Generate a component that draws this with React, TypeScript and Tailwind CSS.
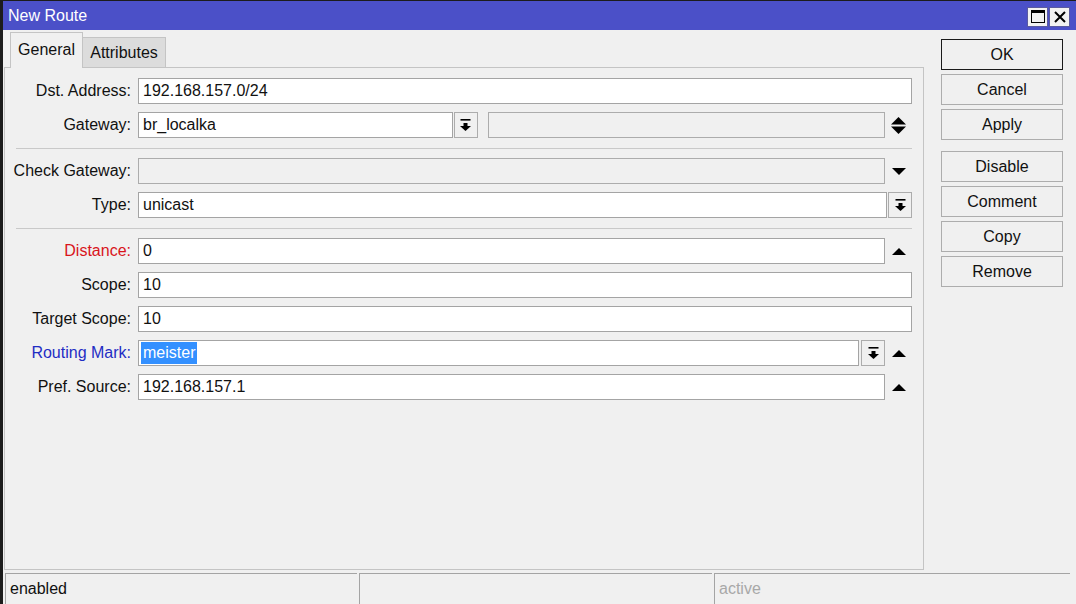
import React from 'react';

const font = { fontFamily: '"Liberation Sans", Arial, sans-serif' };

function DropIcon() {
    return (
        <svg width="11" height="12" viewBox="0 0 11 12">
            <rect x="0.5" y="0" width="10" height="1.6" fill="#000" />
            <rect x="3.5" y="4" width="4" height="3.5" fill="#000" />
            <polygon points="0,7 11,7 5.5,12" fill="#000" />
        </svg>
    );
}

function UpTri() {
    return (
        <svg width="14" height="7" viewBox="0 0 14 7">
            <polygon points="7,0 14,7 0,7" fill="#000" />
        </svg>
    );
}

function DownTri() {
    return (
        <svg width="14" height="7" viewBox="0 0 14 7">
            <polygon points="0,0 14,0 7,7" fill="#000" />
        </svg>
    );
}

function UpDown() {
    return (
        <svg width="15" height="17" viewBox="0 0 15 17">
            <polygon points="7.5,0 15,7.5 0,7.5" fill="#000" />
            <polygon points="0,9.5 15,9.5 7.5,17" fill="#000" />
        </svg>
    );
}

function Field({ value, disabled, className }: { value?: string; disabled?: boolean; className?: string }) {
    return (
        <div
            className={`h-[26px] border flex items-center pl-[4px] text-[16px] text-[#111] ${disabled ? 'bg-[#f0f0f0] border-[#acacac]' : 'bg-white border-[#a4a4a4]'} ${className ?? ''}`}
        >
            {value}
        </div>
    );
}

function DropBtn() {
    return (
        <div className="w-[24px] h-[26px] border border-[#acacac] bg-[#f0f0f0] flex items-center justify-center">
            <DropIcon />
        </div>
    );
}

function Row({ label, color, children }: { label: string; color?: string; children: React.ReactNode }) {
    return (
        <div className="flex items-center h-[26px] mb-[8px]">
            <div className={`w-[126px] text-right text-[16px] ${color ?? 'text-[#111]'}`}>{label}</div>
            <div className="ml-[7px] w-[774px] flex items-center">{children}</div>
        </div>
    );
}

function IconCell({ children }: { children: React.ReactNode }) {
    return <div className="w-[27px] flex items-center justify-center ml-auto">{children}</div>;
}

function Sep() {
    return <div className="ml-[11px] w-[896px] h-px bg-[#c9c9c9] mt-[2px] mb-[9px]" />;
}

const buttons1 = ['OK', 'Cancel', 'Apply'];
const buttons2 = ['Disable', 'Comment', 'Copy', 'Remove'];

function Btn({ label, main }: { label: string; main?: boolean }) {
    return (
        <div
            className={`w-[122px] h-[31px] flex items-center justify-center text-[16px] text-[#111] bg-[#f0f0f0] border ${main ? 'border-[#1a1a1a]' : 'border-[#adadad]'}`}
        >
            {label}
        </div>
    );
}

export default function App() {
    return (
        <div style={font} className="w-[1076px] h-[604px] flex flex-col bg-[#f0f0f0] border-l-[3px] border-t border-[#1c1c1c] overflow-hidden">
            {/* title bar */}
            <div className="h-[29px] bg-[#4b50c8] flex items-center pl-[5px] pr-[6px]">
                <span className="text-white text-[16px]">New Route</span>
                <div className="ml-auto flex gap-[1px] mt-[2px]">
                    <div className="w-[21px] h-[20px] bg-[#f2f2f2] border border-[#5a5aa0] flex items-center justify-center">
                        <svg width="14" height="13" viewBox="0 0 14 13">
                            <rect x="0.5" y="0.5" width="13" height="12" fill="none" stroke="#000" strokeWidth="1" />
                            <rect x="0" y="0" width="14" height="3" fill="#000" />
                        </svg>
                    </div>
                    <div className="w-[21px] h-[20px] bg-[#f2f2f2] border border-[#5a5aa0] flex items-center justify-center">
                        <svg width="12" height="12" viewBox="0 0 12 12">
                            <path d="M1 1 L11 11 M11 1 L1 11" stroke="#000" strokeWidth="2" />
                        </svg>
                    </div>
                </div>
            </div>

            {/* body */}
            <div className="flex-1 flex">
                <div className="ml-[1px] flex flex-col pt-[2px]">
                    <div className="flex items-end h-[35px] ml-[6px]">
                        <div className="h-[36px] -mb-px w-[73px] border border-b-0 border-[#c4c4c4] bg-[#f0f0f0] flex items-center justify-center text-[16px] text-[#111] relative z-10 pb-[2px]">
                            General
                        </div>
                        <div className="h-[30px] w-[83px] border border-l-0 border-b-0 border-[#c4c4c4] bg-[#dcdcdc] flex items-center justify-center text-[16px] text-[#111]">
                            Attributes
                        </div>
                    </div>
                    <div className="w-[920px] flex-1 mb-[3px] border border-[#c4c4c4] pt-[10px] flex flex-col">
                        <Row label="Dst. Address:">
                            <Field value="192.168.157.0/24" className="w-full" />
                        </Row>
                        <Row label="Gateway:">
                            <Field value="br_localka" className="w-[315px]" />
                            <div className="ml-[1px]"><DropBtn /></div>
                            <Field disabled className="ml-[10px] w-[398px]" />
                            <IconCell><UpDown /></IconCell>
                        </Row>
                        <Sep />
                        <Row label="Check Gateway:">
                            <Field disabled className="w-[748px]" />
                            <IconCell><DownTri /></IconCell>
                        </Row>
                        <Row label="Type:">
                            <Field value="unicast" className="w-[749px]" />
                            <div className="ml-auto"><DropBtn /></div>
                        </Row>
                        <Sep />
                        <Row label="Distance:" color="text-[#d9141c]">
                            <Field value="0" className="w-[748px]" />
                            <IconCell><UpTri /></IconCell>
                        </Row>
                        <Row label="Scope:">
                            <Field value="10" className="w-full" />
                        </Row>
                        <Row label="Target Scope:">
                            <Field value="10" className="w-full" />
                        </Row>
                        <Row label="Routing Mark:" color="text-[#1f2dc4]">
                            <div className="h-[26px] w-[722px] border border-[#a4a4a4] bg-white flex items-center pl-[2px]">
                                <span className="bg-[#3390ff] text-white text-[16px] leading-[22px] px-[2px]">meister</span>
                            </div>
                            <div className="ml-[2px]"><DropBtn /></div>
                            <IconCell><UpTri /></IconCell>
                        </Row>
                        <Row label="Pref. Source:">
                            <Field value="192.168.157.1" className="w-[748px]" />
                            <IconCell><UpTri /></IconCell>
                        </Row>
                    </div>
                </div>

                <div className="ml-[17px] pt-[9px] flex flex-col gap-[4px]">
                    {buttons1.map((b, i) => (
                        <Btn key={b} label={b} main={i === 0} />
                    ))}
                    <div className="h-[3px]" />
                    {buttons2.map((b) => (
                        <Btn key={b} label={b} />
                    ))}
                </div>
            </div>

            {/* status bar */}
            <div className="h-[31px] flex gap-[2px] pl-[2px] pr-[6px]">
                <div className="w-[352px] border-t border-l border-[#a4a4a4] flex items-center pl-[4px] text-[16px] text-[#111]">enabled</div>
                <div className="w-[353px] border-t border-l border-[#a4a4a4]" />
                <div className="flex-1 border-t border-l border-[#a4a4a4] flex items-center pl-[4px] text-[16px] text-[#a8a8a8]">active</div>
            </div>
        </div>
    );
}
